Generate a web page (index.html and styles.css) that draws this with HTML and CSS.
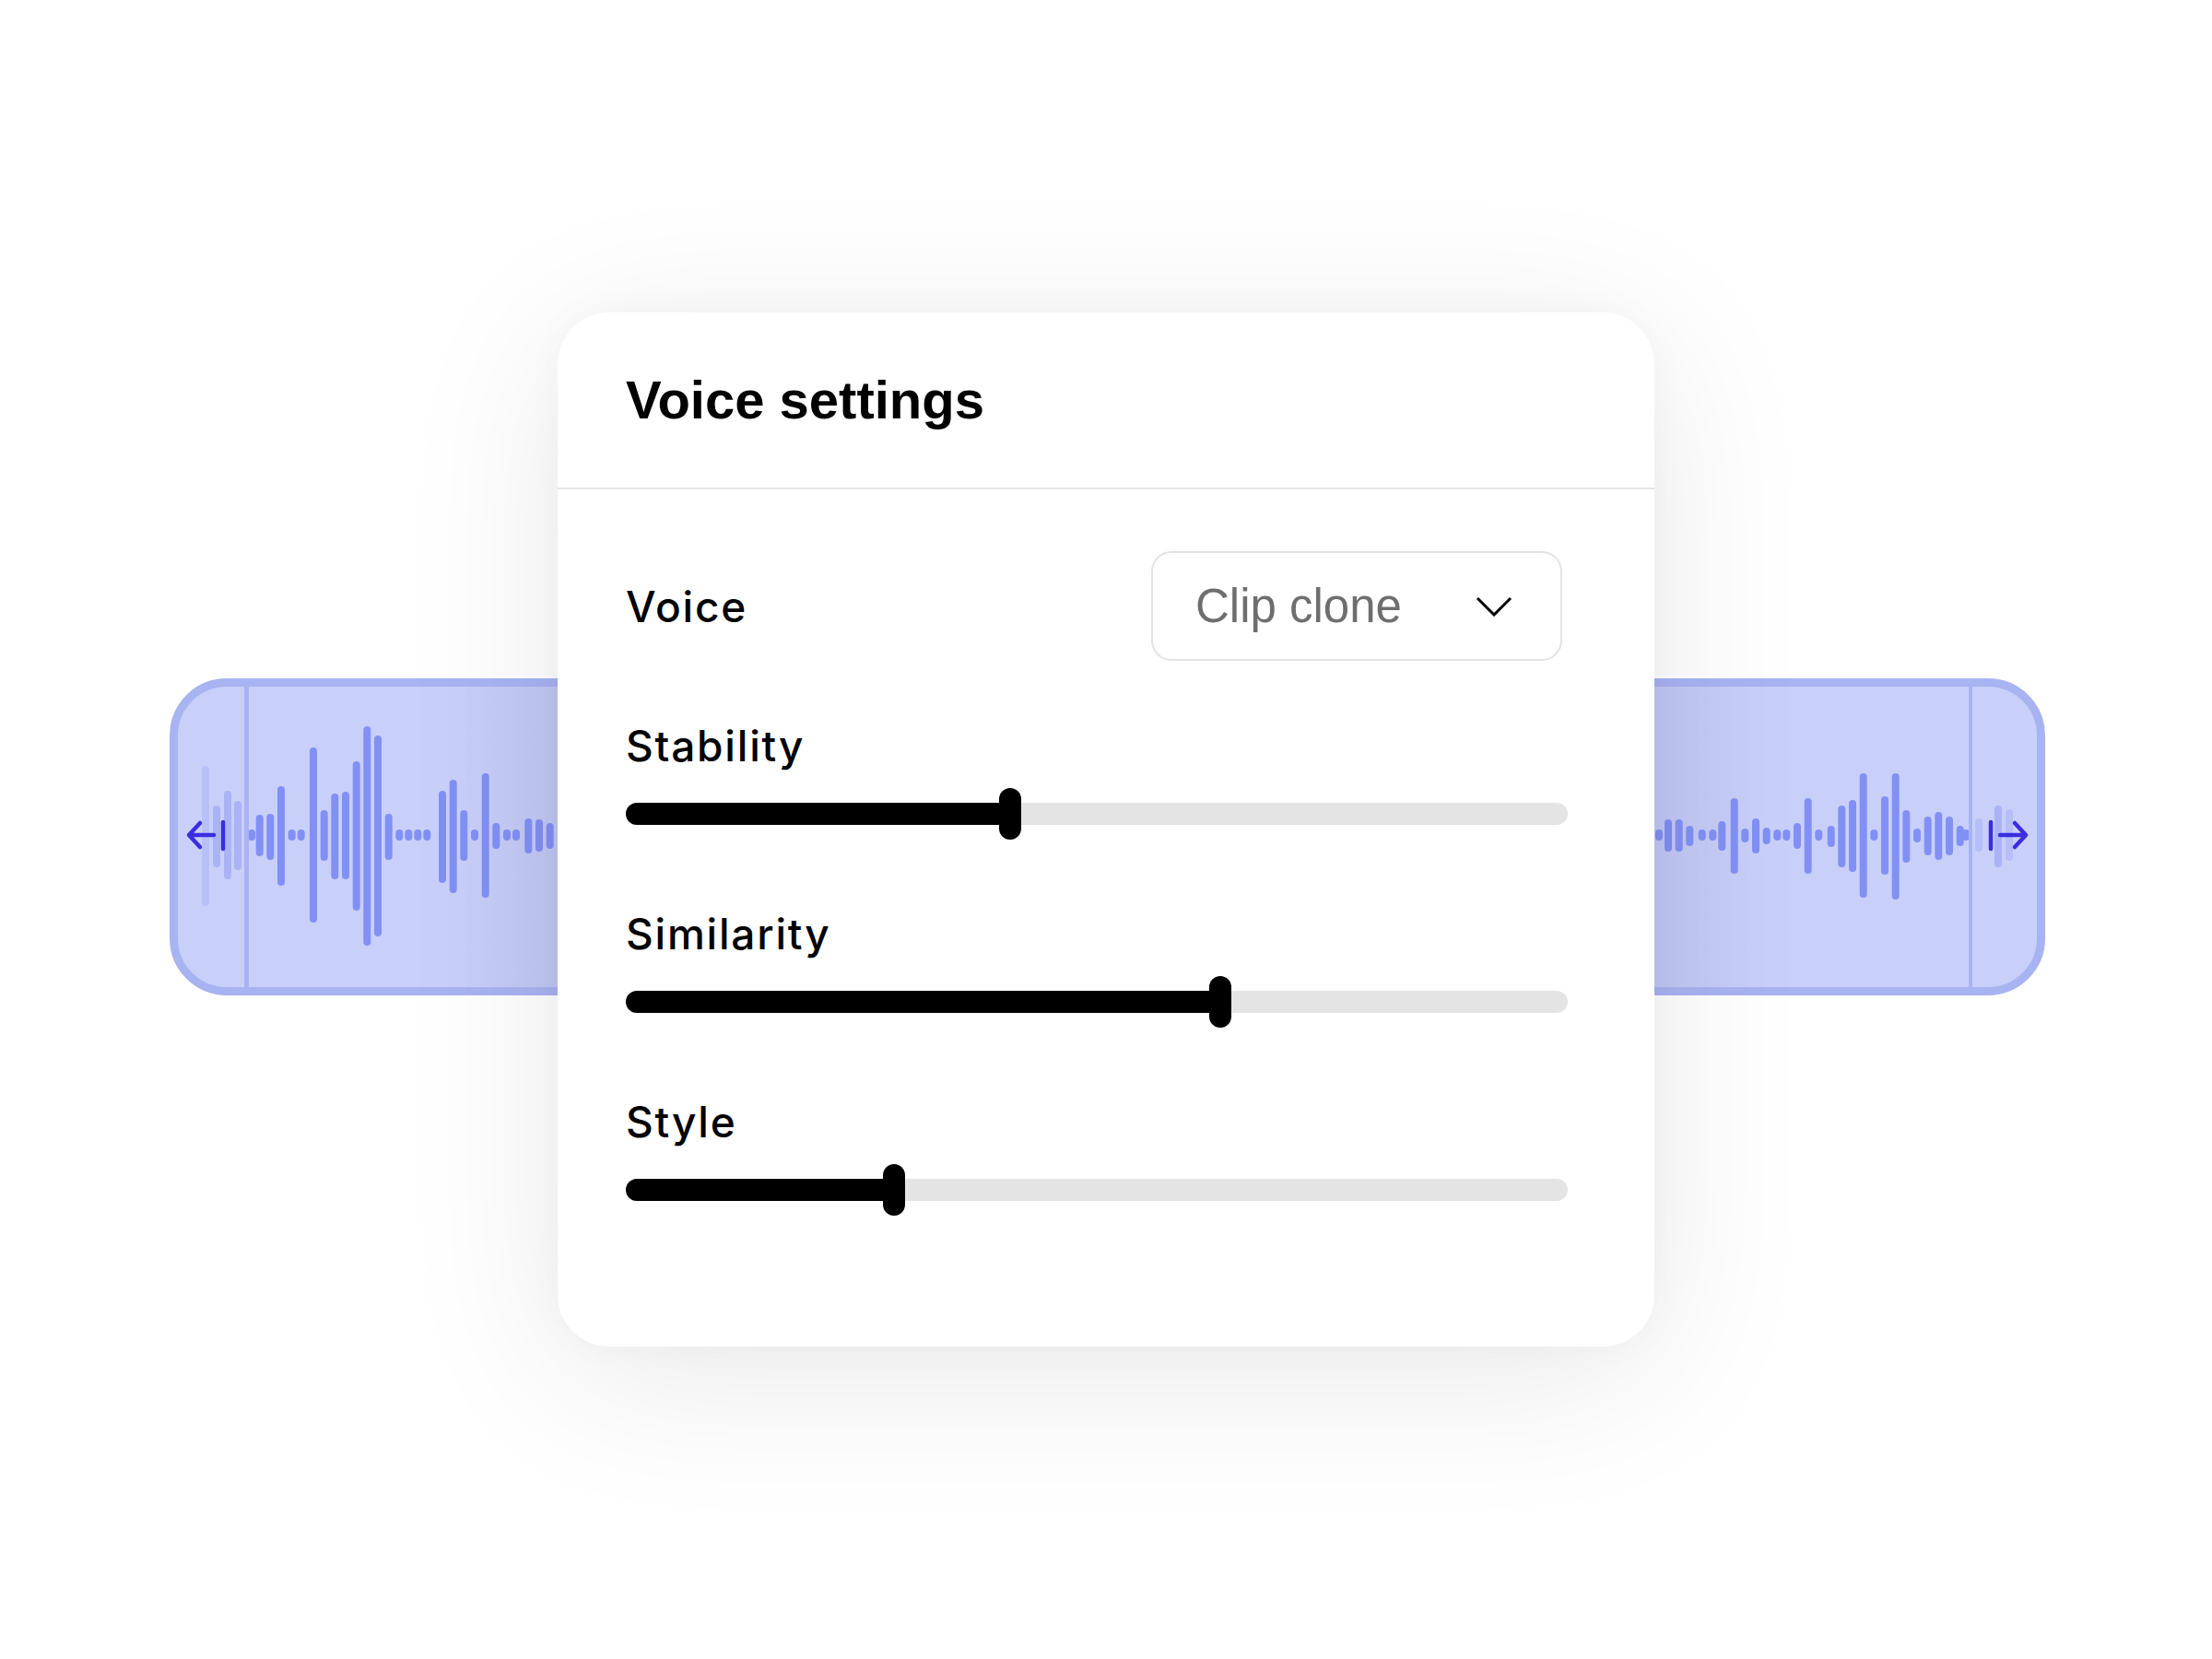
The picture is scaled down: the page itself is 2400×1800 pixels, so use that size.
FILE: index.html
```html
<!DOCTYPE html>
<html lang="en">
<head>
    <meta charset="UTF-8">
    <title>Voice settings</title>
    <link rel="stylesheet" href="styles.css">
</head>
<body>
    <main class="stage">
        <div class="clip">
            <div class="handle handle-left">
                <svg width="72" height="326" viewBox="0 0 72 326">
                    <g class="ghost" stroke-linecap="round">
                        <line x1="30" y1="90" x2="30" y2="234" opacity="0.5"/>
                        <line x1="42" y1="133" x2="42" y2="192"/>
                        <line x1="54" y1="117" x2="54" y2="205"/>
                        <line x1="65" y1="128" x2="65" y2="195"/>
                    </g>
                    <g class="arrow" fill="none" stroke-linecap="round" stroke-linejoin="round">
                        <path d="M39 161H12M24 148L12 161L24 174"/>
                        <path d="M49 147V176"/>
                    </g>
                </svg>
            </div>
            <svg class="wave" width="1866" height="326" viewBox="0 0 1866 326">
                <g class="bars" stroke-linecap="round">
                    <line x1="3" y1="159" x2="3" y2="163"/>
                    <line x1="11.7" y1="143" x2="11.7" y2="180"/>
                    <line x1="23.3" y1="142" x2="23.3" y2="184"/>
                    <line x1="35" y1="112" x2="35" y2="212"/>
                    <line x1="46.7" y1="159" x2="46.7" y2="163"/>
                    <line x1="56.7" y1="159" x2="56.7" y2="163"/>
                    <line x1="70" y1="70" x2="70" y2="252"/>
                    <line x1="81.7" y1="138" x2="81.7" y2="185"/>
                    <line x1="93.3" y1="120" x2="93.3" y2="205"/>
                    <line x1="105" y1="118" x2="105" y2="205"/>
                    <line x1="116.7" y1="85" x2="116.7" y2="239"/>
                    <line x1="128.3" y1="47" x2="128.3" y2="277"/>
                    <line x1="140" y1="57" x2="140" y2="267"/>
                    <line x1="151.7" y1="142" x2="151.7" y2="184"/>
                    <line x1="163.3" y1="159" x2="163.3" y2="163"/>
                    <line x1="173.3" y1="159" x2="173.3" y2="163"/>
                    <line x1="183.3" y1="159" x2="183.3" y2="163"/>
                    <line x1="193.3" y1="159" x2="193.3" y2="163"/>
                    <line x1="210" y1="117" x2="210" y2="209"/>
                    <line x1="221.7" y1="105" x2="221.7" y2="220"/>
                    <line x1="233.3" y1="138" x2="233.3" y2="185"/>
                    <line x1="245" y1="159" x2="245" y2="163"/>
                    <line x1="256.7" y1="98" x2="256.7" y2="225"/>
                    <line x1="268.3" y1="152" x2="268.3" y2="172"/>
                    <line x1="280" y1="159" x2="280" y2="163"/>
                    <line x1="290" y1="159" x2="290" y2="163"/>
                    <line x1="303.3" y1="147" x2="303.3" y2="177"/>
                    <line x1="315" y1="148" x2="315" y2="175"/>
                    <line x1="326.7" y1="152" x2="326.7" y2="172"/>

                    <line x1="1530" y1="159" x2="1530" y2="163"/>
                    <line x1="1540" y1="148" x2="1540" y2="175"/>
                    <line x1="1551.7" y1="148" x2="1551.7" y2="175"/>
                    <line x1="1563.3" y1="155" x2="1563.3" y2="169"/>
                    <line x1="1576.7" y1="159" x2="1576.7" y2="163"/>
                    <line x1="1588.3" y1="159" x2="1588.3" y2="163"/>
                    <line x1="1598.3" y1="150" x2="1598.3" y2="174"/>
                    <line x1="1611.7" y1="125" x2="1611.7" y2="199"/>
                    <line x1="1623.3" y1="158" x2="1623.3" y2="165"/>
                    <line x1="1635" y1="147" x2="1635" y2="177"/>
                    <line x1="1646.7" y1="157" x2="1646.7" y2="167"/>
                    <line x1="1658.3" y1="159" x2="1658.3" y2="163"/>
                    <line x1="1668.3" y1="159" x2="1668.3" y2="163"/>
                    <line x1="1680" y1="152" x2="1680" y2="172"/>
                    <line x1="1691.7" y1="125" x2="1691.7" y2="199"/>
                    <line x1="1703.3" y1="159" x2="1703.3" y2="163"/>
                    <line x1="1716.7" y1="155" x2="1716.7" y2="170"/>
                    <line x1="1728.3" y1="133" x2="1728.3" y2="192"/>
                    <line x1="1740" y1="127" x2="1740" y2="197"/>
                    <line x1="1751.7" y1="98" x2="1751.7" y2="225"/>
                    <line x1="1763.3" y1="159" x2="1763.3" y2="163"/>
                    <line x1="1775" y1="123" x2="1775" y2="200"/>
                    <line x1="1786.7" y1="98" x2="1786.7" y2="227"/>
                    <line x1="1798.3" y1="138" x2="1798.3" y2="187"/>
                    <line x1="1810" y1="158" x2="1810" y2="165"/>
                    <line x1="1821.7" y1="145" x2="1821.7" y2="179"/>
                    <line x1="1833.3" y1="140" x2="1833.3" y2="184"/>
                    <line x1="1845" y1="145" x2="1845" y2="179"/>
                    <line x1="1856.7" y1="155" x2="1856.7" y2="169"/>
                    <line x1="1863" y1="159" x2="1863" y2="163"/>
                </g>
            </svg>
            <div class="handle handle-right">
                <svg width="70" height="326" viewBox="0 0 70 326">
                    <g class="ghost" stroke-linecap="round">
                        <line x1="7" y1="147" x2="7" y2="175" opacity="0.6"/>
                        <line x1="28" y1="133" x2="28" y2="192"/>
                        <line x1="40" y1="137" x2="40" y2="185" opacity="0.6"/>
                    </g>
                    <g class="arrow" fill="none" stroke-linecap="round" stroke-linejoin="round">
                        <path d="M20 147V176"/>
                        <path d="M30 161H58M46 148L58 161L46 174"/>
                    </g>
                </svg>
            </div>
        </div>

        <section class="card">
            <header class="card-head">
                <h2>Voice settings</h2>
            </header>
            <div class="card-body">
                <div class="voice-row">
                    <span class="label">Voice</span>
                    <div class="select">
                        <span>Clip clone</span>
                        <svg width="40" height="22" viewBox="0 0 40 22" fill="none">
                            <path d="M2 2L20 20L38 2" stroke="#000" stroke-width="3"/>
                        </svg>
                    </div>
                </div>
                <div class="slider">
                    <span class="label">Stability</span>
                    <div class="track"><div class="fill" style="width: 40.8%"><span class="thumb"></span></div></div>
                </div>
                <div class="slider">
                    <span class="label">Similarity</span>
                    <div class="track"><div class="fill" style="width: 63.1%"><span class="thumb"></span></div></div>
                </div>
                <div class="slider">
                    <span class="label">Style</span>
                    <div class="track"><div class="fill" style="width: 28.5%"><span class="thumb"></span></div></div>
                </div>
            </div>
        </section>
    </main>
</body>
</html>
```

FILE: styles.css
```css
body {
    margin: 0;
    background: #ffffff;
    font-family: 'Inter', 'Liberation Sans', sans-serif;
    color: #000;
}
.stage {
    display: grid;
    place-items: center;
    height: 1800px;
}
.stage > * {
    grid-area: 1 / 1;
}

/* audio clip strip behind the card */
.clip {
    box-sizing: border-box;
    width: 2035px;
    height: 344px;
    margin: 16px 0 0 3px;
    display: flex;
    border: 9px solid #a8b3f2;
    border-radius: 62px;
    background: linear-gradient(to right, #c8d0fa 0, #c8d0fa 300px, #c0c7f3 411px, #c0c7f3 1600px, #c8d0fa 1720px);
    overflow: hidden;
}
.handle {
    flex: none;
    display: flex;
}
.handle-left {
    width: 72px;
    border-right: 5px solid #a8b3f2;
}
.handle-right {
    width: 70px;
    border-left: 4px solid #a8b3f2;
}
.wave {
    flex: none;
    display: block;
}
.bars line {
    stroke: #8290f5;
    stroke-width: 8;
}
.ghost line {
    stroke: #aab3f6;
    stroke-width: 8;
}
.arrow path {
    stroke: #3a2ee0;
    stroke-width: 4.5;
}

/* settings card */
.card {
    box-sizing: border-box;
    width: 1190px;
    height: 1122px;
    background: #fff;
    border-radius: 56px;
    box-shadow: 0 30px 180px rgba(0, 0, 0, 0.09), 0 0 40px rgba(0, 0, 0, 0.03);
    z-index: 1;
}
.card-head {
    box-sizing: border-box;
    height: 192px;
    padding-left: 74px;
    display: flex;
    align-items: center;
    border-bottom: 2px solid #e6e6e6;
}
.card-head h2 {
    margin: 0;
    font-family: 'Liberation Sans', Arial, sans-serif;
    font-weight: 700;
    font-size: 58px;
    line-height: 1;
}
.card-body {
    padding: 67px 94px 0 74px;
    display: flex;
    flex-direction: column;
}
.label {
    font-size: 46px;
    font-weight: 500;
    line-height: 1;
    letter-spacing: 1.8px;
}
.voice-row {
    display: flex;
    justify-content: space-between;
    align-items: center;
}
.select {
    box-sizing: border-box;
    width: 446px;
    height: 119px;
    margin-right: 6px;
    padding: 0 52px 0 46px;
    display: flex;
    justify-content: space-between;
    align-items: center;
    border: 2px solid #e3e3e3;
    border-radius: 22px;
    font-family: 'Liberation Sans', Arial, sans-serif;
    font-size: 51px;
    color: #6e6e6e;
}
.slider {
    display: flex;
    flex-direction: column;
    gap: 39px;
    margin-top: 95px;
}
.voice-row + .slider {
    margin-top: 69px;
}
.track {
    position: relative;
    height: 24px;
    border-radius: 12px;
    background: #e4e4e4;
}
.fill {
    position: relative;
    height: 100%;
    background: #000;
    border-radius: 12px 0 0 12px;
}
.thumb {
    position: absolute;
    right: -12px;
    top: -16px;
    width: 24px;
    height: 56px;
    border-radius: 12px;
    background: #000;
}
```
